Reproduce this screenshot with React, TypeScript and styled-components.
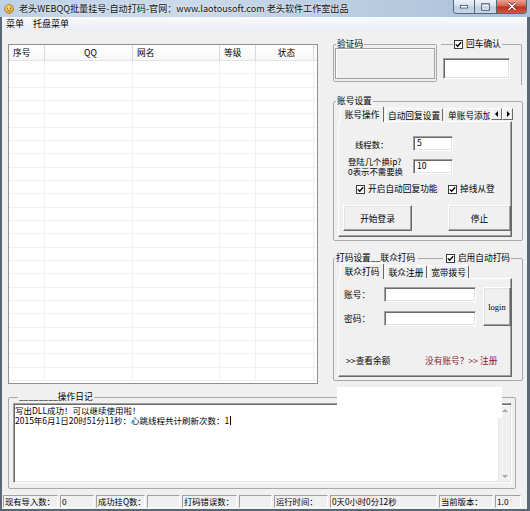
import React from "react";
import styled, { createGlobalStyle, css } from "styled-components";

const FONT = `"Noto Sans CJK SC", "Liberation Sans", sans-serif`;

const GlobalStyle = createGlobalStyle`
  * { box-sizing: border-box; }
  html, body { margin: 0; padding: 0; }
  body {
    width: 530px; height: 511px; overflow: hidden; background: #f0f0f0;
    font-family: ${FONT}; font-size: 8.7px; color: #000;
  }
`;

const Window = styled.div`
  position: relative; width: 530px; height: 511px;
  display: flex; flex-direction: column; background: #f0f0f0; overflow: hidden;
`;

const TitleBar = styled.div`
  flex: none; height: 17px; display: flex; align-items: center; padding: 0 3px 0 4px;
  background: linear-gradient(90deg, #bfd1e5 0%, #cbdaea 35%, #b8cbe0 70%, #aac0d9 100%);
`;
const AppIcon = styled.svg` flex: none; width: 10px; height: 10px; `;
const TitleText = styled.span`
  margin-left: 5px; font-size: 9.1px; line-height: 17px; color: #111; white-space: nowrap;
  text-shadow: 0 0 3px rgba(255,255,255,0.9);
`;
const CaptionButtons = styled.div`
  margin-left: auto; align-self: flex-start; display: flex; height: 14px;
  border: 1px solid #52657c; border-top: none; border-radius: 0 0 4px 4px; overflow: hidden;
`;
const CaptionBtn = styled.div<{ $w: number; $close?: boolean }>`
  width: ${(p) => p.$w}px; height: 100%; display: flex; align-items: center; justify-content: center;
  background: ${(p) =>
    p.$close
      ? "linear-gradient(#e9a294, #d0604c 48%, #b9331f 52%, #c95a3f)"
      : "linear-gradient(#eef3f9, #d3dfec 48%, #bccde0 52%, #c9d8e8)"};
  & + & { border-left: 1px solid #52657c; }
`;

const Frame = styled.div`
  flex: 1; min-height: 0; display: flex; flex-direction: column;
  border-left: 2px solid #5a6876; border-right: 3px solid #5a6876; border-bottom: 2px solid #5a6876;
`;

const MenuBar = styled.div`
  flex: none; height: 14px; display: flex; align-items: center; gap: 9px; padding-left: 4px;
  background: linear-gradient(#f8fafc, #e9eef4);
`;
const MenuItem = styled.span` font-size: 9px; line-height: 14px; `;

const Main = styled.div`
  flex: none; height: 353px; display: grid; grid-template-columns: 310px 190px;
  column-gap: 15px; padding: 8px 0 0 6px;
`;

/* ---------- list view ---------- */
const COLS = "36px 88px 87px 36px 58px 1fr";
const ListView = styled.div`
  margin-top: 5px; height: 340px; background: #fff; border: 1px solid #8d9094;
  display: flex; flex-direction: column; overflow: hidden;
`;
const ListHeader = styled.div`
  flex: none; height: 16px; display: grid; grid-template-columns: ${COLS};
  background: linear-gradient(#ffffff, #f6f7f8); border-bottom: 1px solid #e3e4e6;
`;
const HeaderCell = styled.div<{ $center?: boolean; $last?: boolean }>`
  display: flex; align-items: center; padding-left: 4px; line-height: 15px;
  justify-content: ${(p) => (p.$center ? "center" : "flex-start")};
  border-right: 1px solid ${(p) => (p.$last ? "transparent" : "#d9dadc")};
`;
const ListBody = styled.div` flex: 1; display: flex; flex-direction: column; `;
const ListRow = styled.div`
  flex: none; height: calc(40px / 3); display: grid; grid-template-columns: ${COLS};
  border-bottom: 1px solid #f0f0f0;
`;
const ListCell = styled.div` border-right: 1px solid #f0f0f0; &:last-child { border-right: none; } `;

/* ---------- group boxes ---------- */
const RightPanel = styled.div` display: flex; flex-direction: column; `;
const GroupBox = styled.fieldset`
  margin: 0; min-width: 0; padding: 0; border: 1px solid #a9a9a9; border-radius: 2px;
`;
const Legend = styled.legend<{ $ml?: number; $w?: number }>`
  padding: 0 1px; margin-left: ${(p) => p.$ml ?? 1}px; line-height: 10px; font-size: 8.7px;
  ${(p) => p.$w && css`width: ${p.$w}px;`}
`;
const LegendRow = styled.span` display: flex; align-items: center; width: 100%; height: 10px; `;
const LegendLine = styled.span` flex: 1; height: 1px; background: #a9a9a9; margin: 0 3px; `;
const CheckLabel = styled.span<{ $gap?: number }>`
  display: inline-flex; align-items: center; gap: ${(p) => p.$gap ?? 3}px; white-space: nowrap;
  line-height: 10px;
`;
const CheckBox = styled.span`
  flex: none; display: inline-flex; align-items: center; justify-content: center;
  width: 9px; height: 9px; background: #fff; border: 1px solid #3a3a3a;
`;

const CaptchaRow = styled.div` display: flex; height: 46px; `;
const CaptchaGroup = styled(GroupBox)` width: 104px; height: 43px; padding: 0 1px; `;
const PictureBox = styled.div`
  height: 31px; margin-top: -1px; border: 1px solid #a0a0a0; box-shadow: inset 1px 1px 0 #fff;
  background: #f0f0f0;
`;
const ConfirmGroup = styled(GroupBox)`
  width: 81px; height: 46px; margin-left: 4px; padding: 8px 0 0 2px;
  border-left: none; border-bottom: none; border-radius: 0 2px 0 0;
`;

const AccountGroup = styled(GroupBox)` margin-top: 11px; padding: 0 10px 3px 4px; `;
const DamaGroup = styled(GroupBox)` margin-top: 12px; padding: 0 10px 3px 4px; `;

/* ---------- tabs ---------- */
const TabStrip = styled.div`
  position: relative; z-index: 1; display: flex; align-items: flex-end; height: 15px; padding-left: 2px;
`;
const Tab = styled.div<{ $w: number; $active?: boolean; $clip?: boolean }>`
  flex: none; width: ${(p) => p.$w}px; height: 13px; margin-right: 1px;
  display: flex; align-items: center; justify-content: center; white-space: nowrap; overflow: hidden;
  background: #f0f0f0; border: 1px solid; border-bottom: none;
  border-color: #fff #696969 transparent #fff; border-radius: 2px 2px 0 0;
  ${(p) => p.$active && css` height: 16px; margin-bottom: -1px; padding-bottom: 1px; `}
  ${(p) => p.$clip && css` justify-content: flex-start; padding-left: 3px; border-right: none; `}
`;
const TabArrows = styled.div` margin-left: auto; display: flex; align-self: flex-end; margin-bottom: 1px; `;
const ArrowBtn = styled.div`
  width: 11px; height: 12px; display: flex; align-items: center; justify-content: center;
  background: #f0f0f0; border: 1px solid; border-color: #fff #696969 #696969 #fff;
`;
const TabPage = styled.div<{ $h: number }>`
  height: ${(p) => p.$h}px; background: #f0f0f0; border: 1px solid;
  border-color: #fff #696969 #696969 #fff; box-shadow: inset -1px -1px 0 #a0a0a0;
`;

/* ---------- controls ---------- */
const TextBox = styled.div<{ $w: number; $h: number }>`
  width: ${(p) => p.$w}px; height: ${(p) => p.$h}px; background: #fff;
  border: 1px solid; border-color: #a0a0a0 #fff #fff #a0a0a0;
  box-shadow: inset 1px 1px 0 #696969, inset -1px -1px 0 #e3e3e3;
  display: flex; align-items: center; padding-left: 3px; font-size: 8.7px; line-height: 1;
`;
const Btn = styled.button<{ $w: number; $h: number; $serif?: boolean }>`
  width: ${(p) => p.$w}px; height: ${(p) => p.$h}px; margin: 0; padding: 0;
  font-family: ${(p) => (p.$serif ? `"Liberation Serif", serif` : FONT)};
  font-size: ${(p) => (p.$serif ? 8.5 : 8.7)}px; color: #000; background: #f0f0f0;
  border: 1px solid; border-color: #fff #696969 #696969 #fff;
  box-shadow: inset -1px -1px 0 #a0a0a0, inset 1px 1px 0 #e3e3e3;
  display: flex; align-items: center; justify-content: center;
`;

/* account page */
const AccountBody = styled.div` display: flex; flex-direction: column; padding-top: 14px; `;
const FieldRow = styled.div<{ $h: number; $mt?: number }>`
  display: grid; grid-template-columns: 74px 40px; align-items: center;
  height: ${(p) => p.$h}px; margin-top: ${(p) => p.$mt ?? 0}px;
`;
const FieldLabel = styled.div<{ $pl: number }>`
  padding-left: ${(p) => p.$pl}px; font-size: 8.4px; line-height: 10px; white-space: nowrap;
`;
const CheckRow = styled.div`
  display: grid; grid-template-columns: 92px auto; height: 10px; margin-top: 8px; padding-left: 17px;
`;
const ButtonRow = styled.div`
  display: grid; grid-template-columns: 105px 63px; margin-top: 11px; padding-left: 4px;
`;

/* dama page */
const DamaBody = styled.div` display: flex; flex-direction: column; padding: 8px 0 0 5px; `;
const LoginGrid = styled.div`
  display: grid; grid-template-columns: 40px 92px 35px; grid-template-rows: 15px 15px; row-gap: 9px;
  align-items: center;
`;
const LoginBtnCell = styled.div` grid-column: 3; grid-row: 1 / span 2; justify-self: end; `;
const LinkRow = styled.div`
  display: grid; grid-template-columns: 79px auto; margin-top: 28px; padding-left: 2px;
  height: 11px; align-items: center;
`;
const Link = styled.span<{ $red?: boolean }>` color: ${(p) => (p.$red ? "#8a1d1d" : "#000")}; white-space: nowrap; `;

/* ---------- log ---------- */
const LogGroup = styled(GroupBox)`
  width: 508px; height: 97px; margin: 8px 0 0 6px; padding: 1px 3px 0 4px;
`;
const LogBox = styled.div`
  height: 80px; display: flex; background: #fff;
  border: 1px solid; border-color: #a0a0a0 #fff #fff #a0a0a0;
  box-shadow: inset 1px 1px 0 #696969, inset -1px -1px 0 #e3e3e3;
`;
const LogText = styled.div`
  flex: 1; padding: 1px 0 0 1px; font-size: 8.5px; line-height: 10px; white-space: pre;
`;
const Caret = styled.span` display: inline-block; width: 1px; height: 9px; background: #000; vertical-align: -1px; margin-left: 1px; `;
const ScrollBar = styled.div`
  width: 12px; margin: 2px 1px 1px 0; display: flex; flex-direction: column; justify-content: space-between;
  background: #f0f0f0; border-left: 1px solid #e6e6e6;
`;
const ScrollArrow = styled.div` height: 10px; display: flex; align-items: center; justify-content: center; `;

const WhitePatch = styled.div`
  position: absolute; left: 337px; top: 387px; width: 165px; height: 31px; background: #fff;
`;

/* ---------- status bar ---------- */
const StatusBar = styled.div`
  flex: none; height: 16px; margin-top: 4px; display: flex; align-items: center; gap: 2px; padding-left: 1px;
`;
const StatusPanel = styled.div<{ $w: number }>`
  width: ${(p) => p.$w}px; height: 13px; display: flex; align-items: center; padding-left: 1px;
  border: 1px solid; border-color: #a0a0a0 #fff #fff #a0a0a0; white-space: nowrap; overflow: hidden;
  font-size: 8.3px;
`;

const Check = () => (
  <CheckBox>
    <svg width="7" height="7" viewBox="0 0 7 7">
      <path d="M0.8 3.4 L2.7 5.3 L6.2 1.3" fill="none" stroke="#000" strokeWidth="1.3" />
    </svg>
  </CheckBox>
);

const Tri = ({ dir }: { dir: "l" | "r" | "u" | "d" }) => {
  const d =
    dir === "l" ? "M5 1 L2 4 L5 7 Z" : dir === "r" ? "M3 1 L6 4 L3 7 Z" : dir === "u" ? "M1 5 L4 2 L7 5 Z" : "M1 3 L4 6 L7 3 Z";
  return (
    <svg width="8" height="8" viewBox="0 0 8 8">
      <path d={d} fill={dir === "u" || dir === "d" ? "#a8a8a8" : "#000"} />
    </svg>
  );
};

const statusItems: [number, string][] = [
  [55, "现有导入数："],
  [34, "0"],
  [49, "成功挂Q数："],
  [33, ""],
  [55, "打码错误数："],
  [33, ""],
  [54, "运行时间："],
  [107, "0天0小时0分12秒"],
  [54, "当前版本："],
  [26, "1.0"],
];

export default function App() {
  const rows = Array.from({ length: 24 }, (_, i) => i);
  return (
    <>
      <GlobalStyle />
      <Window>
        <TitleBar>
          <AppIcon viewBox="0 0 10 10">
            <defs>
              <radialGradient id="ig" cx="40%" cy="35%" r="70%">
                <stop offset="0" stopColor="#ffe68a" />
                <stop offset="1" stopColor="#e59a1c" />
              </radialGradient>
            </defs>
            <circle cx="5" cy="5" r="4.4" fill="url(#ig)" stroke="#a8661a" strokeWidth="0.7" />
            <circle cx="3.6" cy="4.2" r="0.6" fill="#5a3a10" />
            <circle cx="6.4" cy="4.2" r="0.6" fill="#5a3a10" />
            <path d="M3.3 6.2 Q5 7.6 6.7 6.2" fill="none" stroke="#5a3a10" strokeWidth="0.6" />
          </AppIcon>
          <TitleText>老头WEBQQ批量挂号-自动打码-官网：www.laotousoft.com 老头软件工作室出品</TitleText>
          <CaptionButtons>
            <CaptionBtn $w={20}>
              <svg width="8" height="4" viewBox="0 0 8 4">
                <rect x="0.5" y="0.5" width="7" height="2.5" fill="#fff" stroke="#3b4a5c" strokeWidth="0.8" />
              </svg>
            </CaptionBtn>
            <CaptionBtn $w={22}>
              <svg width="9" height="8" viewBox="0 0 9 8">
                <rect x="0.8" y="0.8" width="7.4" height="6.4" fill="none" stroke="#3b4a5c" strokeWidth="1" />
                <rect x="1.8" y="2.3" width="5.4" height="4" fill="none" stroke="#fff" strokeWidth="0.8" />
              </svg>
            </CaptionBtn>
            <CaptionBtn $w={30} $close>
              <svg width="10" height="9" viewBox="0 0 10 9">
                <path d="M1.5 1 L8.5 8 M8.5 1 L1.5 8" stroke="#5a1b12" strokeWidth="2.6" />
                <path d="M1.5 1 L8.5 8 M8.5 1 L1.5 8" stroke="#fff" strokeWidth="1.5" />
              </svg>
            </CaptionBtn>
          </CaptionButtons>
        </TitleBar>
        <Frame>
          <MenuBar>
            <MenuItem>菜单</MenuItem>
            <MenuItem>托盘菜单</MenuItem>
          </MenuBar>
          <Main>
            <ListView>
              <ListHeader>
                <HeaderCell>序号</HeaderCell>
                <HeaderCell $center>QQ</HeaderCell>
                <HeaderCell>网名</HeaderCell>
                <HeaderCell>等级</HeaderCell>
                <HeaderCell $center>状态</HeaderCell>
                <HeaderCell $last />
              </ListHeader>
              <ListBody>
                {rows.map((r) => (
                  <ListRow key={r}>
                    <ListCell />
                    <ListCell />
                    <ListCell />
                    <ListCell />
                    <ListCell />
                    <ListCell />
                  </ListRow>
                ))}
              </ListBody>
            </ListView>
            <RightPanel>
              <CaptchaRow>
                <CaptchaGroup>
                  <Legend $ml={1}>验证码</Legend>
                  <PictureBox />
                </CaptchaGroup>
                <ConfirmGroup>
                  <Legend $ml={10}>
                    <CheckLabel>
                      <Check />
                      回车确认
                    </CheckLabel>
                  </Legend>
                  <TextBox $w={67} $h={21} />
                </ConfirmGroup>
              </CaptchaRow>
              <AccountGroup>
                <Legend $ml={-2}>账号设置</Legend>
                <TabStrip>
                  <Tab $w={44} $active>账号操作</Tab>
                  <Tab $w={58}>自动回复设置</Tab>
                  <Tab $w={46} $clip>单账号添加</Tab>
                  <TabArrows>
                    <ArrowBtn>
                      <Tri dir="l" />
                    </ArrowBtn>
                    <ArrowBtn>
                      <Tri dir="r" />
                    </ArrowBtn>
                  </TabArrows>
                </TabStrip>
                <TabPage $h={116}>
                  <AccountBody>
                    <FieldRow $h={15}>
                      <FieldLabel $pl={16}>线程数：</FieldLabel>
                      <TextBox $w={40} $h={15}>5</TextBox>
                    </FieldRow>
                    <FieldRow $h={20} $mt={5}>
                      <FieldLabel $pl={9}>
                        登陆几个换ip?
                        <br />
                        0表示不需要换
                      </FieldLabel>
                      <TextBox $w={40} $h={15}>10</TextBox>
                    </FieldRow>
                    <CheckRow>
                      <CheckLabel>
                        <Check />
                        开启自动回复功能
                      </CheckLabel>
                      <CheckLabel>
                        <Check />
                        掉线从登
                      </CheckLabel>
                    </CheckRow>
                    <ButtonRow>
                      <Btn $w={69} $h={26}>开始登录</Btn>
                      <Btn $w={63} $h={26}>停止</Btn>
                    </ButtonRow>
                  </AccountBody>
                </TabPage>
              </AccountGroup>
              <DamaGroup>
                <Legend $ml={-3} $w={176}>
                  <LegendRow>
                    <span>打码设置__联众打码</span>
                    <LegendLine />
                    <CheckLabel>
                      <Check />
                      启用自动打码
                    </CheckLabel>
                  </LegendRow>
                </Legend>
                <TabStrip>
                  <Tab $w={44} $active>联众打码</Tab>
                  <Tab $w={42}>联众注册</Tab>
                  <Tab $w={41}>宽带拨号</Tab>
                </TabStrip>
                <TabPage $h={99}>
                  <DamaBody>
                    <LoginGrid>
                      <span>账号：</span>
                      <TextBox $w={92} $h={15} />
                      <LoginBtnCell>
                        <Btn $w={28} $h={39} $serif>
                          login
                        </Btn>
                      </LoginBtnCell>
                      <span>密码：</span>
                      <TextBox $w={92} $h={15} />
                    </LoginGrid>
                    <LinkRow>
                      <Link>&gt;&gt;查看余额</Link>
                      <Link $red>没有账号？&gt;&gt; 注册</Link>
                    </LinkRow>
                  </DamaBody>
                </TabPage>
              </DamaGroup>
            </RightPanel>
          </Main>
          <LogGroup>
            <Legend $ml={5}>________操作日记</Legend>
            <LogBox>
              <LogText>
                写出DLL成功！可以继续使用啦！
                {"\n"}2015年6月1日20时51分11秒：心跳线程共计刷新次数：1
                <Caret />
              </LogText>
              <ScrollBar>
                <ScrollArrow>
                  <Tri dir="u" />
                </ScrollArrow>
                <ScrollArrow>
                  <Tri dir="d" />
                </ScrollArrow>
              </ScrollBar>
            </LogBox>
          </LogGroup>
          <StatusBar>
            {statusItems.map(([w, t], i) => (
              <StatusPanel key={i} $w={w}>
                {t}
              </StatusPanel>
            ))}
          </StatusBar>
        </Frame>
        <WhitePatch />
      </Window>
    </>
  );
}
